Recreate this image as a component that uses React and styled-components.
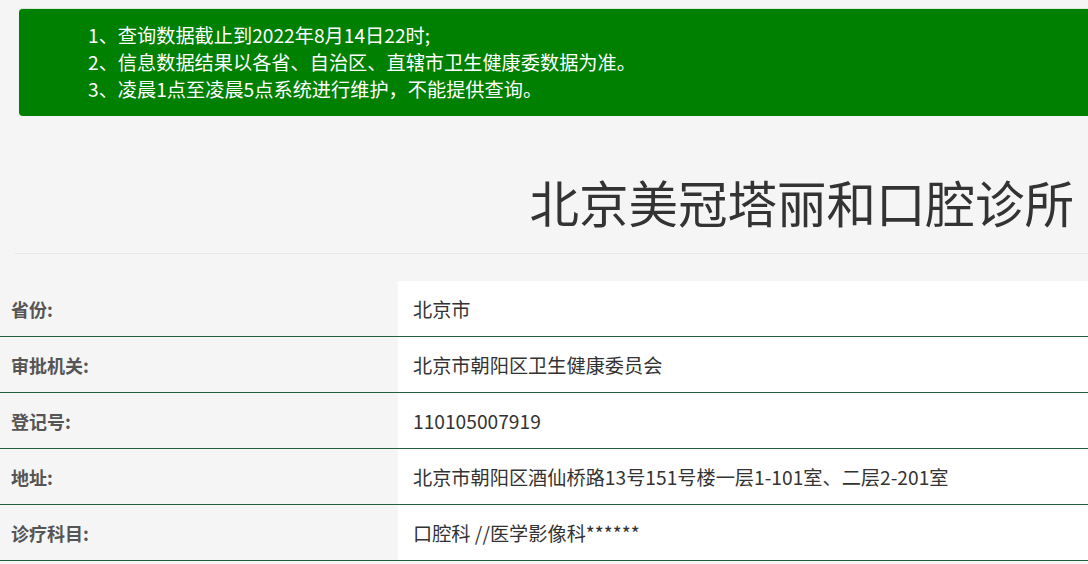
import React from 'react'
import styled, { createGlobalStyle } from 'styled-components'

const GlobalStyle = createGlobalStyle`
  html, body {
    margin: 0;
    padding: 0;
    background: #f5f5f5;
    overflow-x: hidden;
  }
  body {
    font-family: "Noto Sans CJK SC", "Noto Sans", sans-serif;
    color: #333;
  }
`

const notices = [
  '1、查询数据截止到2022年8月14日22时;',
  '2、信息数据结果以各省、自治区、直辖市卫生健康委数据为准。',
  '3、凌晨1点至凌晨5点系统进行维护，不能提供查询。'
]

const rows = [
  { label: '省份:', value: '北京市' },
  { label: '审批机关:', value: '北京市朝阳区卫生健康委员会' },
  { label: '登记号:', value: '110105007919' },
  { label: '地址:', value: '北京市朝阳区酒仙桥路13号151号楼一层1-101室、二层2-201室' },
  { label: '诊疗科目:', value: '口腔科 //医学影像科******' }
]

const App = () => {
  return (
    <Page>
      <GlobalStyle />
      <Notice>
        {notices.map((n) => (
          <NoticeLine key={n}>{n}</NoticeLine>
        ))}
      </Notice>
      <TitleBar>
        <Title>北京美冠塔丽和口腔诊所</Title>
      </TitleBar>
      <InfoTable>
        {rows.map((r) => (
          <Row key={r.label}>
            <Label>{r.label}</Label>
            <Value>{r.value}</Value>
          </Row>
        ))}
      </InfoTable>
    </Page>
  )
}

export default App

// STYLING
const Page = styled.div`
  width: 100%;
`

const Notice = styled.div`
  margin: 8px -20px 0 19px;
  height: 108px;
  box-sizing: border-box;
  padding: 13px 0 0 69px;
  background: #008000;
  border-radius: 4px;
  border-top: 1px solid #d8e8d8;
  color: #fff;
  font-size: 19.2px;
  line-height: 27px;
`

const NoticeLine = styled.div`
  white-space: nowrap;
`

const TitleBar = styled.div`
  margin: 0 0 0 15px;
  padding: 59px 14px 24px 0;
  border-bottom: 1px solid #e6e6e6;
  text-align: right;
`

const Title = styled.h1`
  margin: 0;
  font-size: 49.5px;
  font-weight: 400;
  line-height: 54px;
  color: #333;
`

const InfoTable = styled.div`
  margin-top: 27px;
  display: flex;
  flex-direction: column;
`

const Row = styled.div`
  display: grid;
  grid-template-columns: 398px 1fr;
  height: 56px;
  box-sizing: border-box;
  border-bottom: 1px solid #245e3f;
`

const Label = styled.div`
  display: flex;
  align-items: center;
  padding-left: 11px;
  background: #f5f5f5;
  font-size: 18px;
  font-weight: 700;
  color: #555;
`

const Value = styled.div`
  display: flex;
  align-items: center;
  padding-left: 15px;
  background: #fff;
  font-size: 19.2px;
  color: #333;
  white-space: nowrap;
`
